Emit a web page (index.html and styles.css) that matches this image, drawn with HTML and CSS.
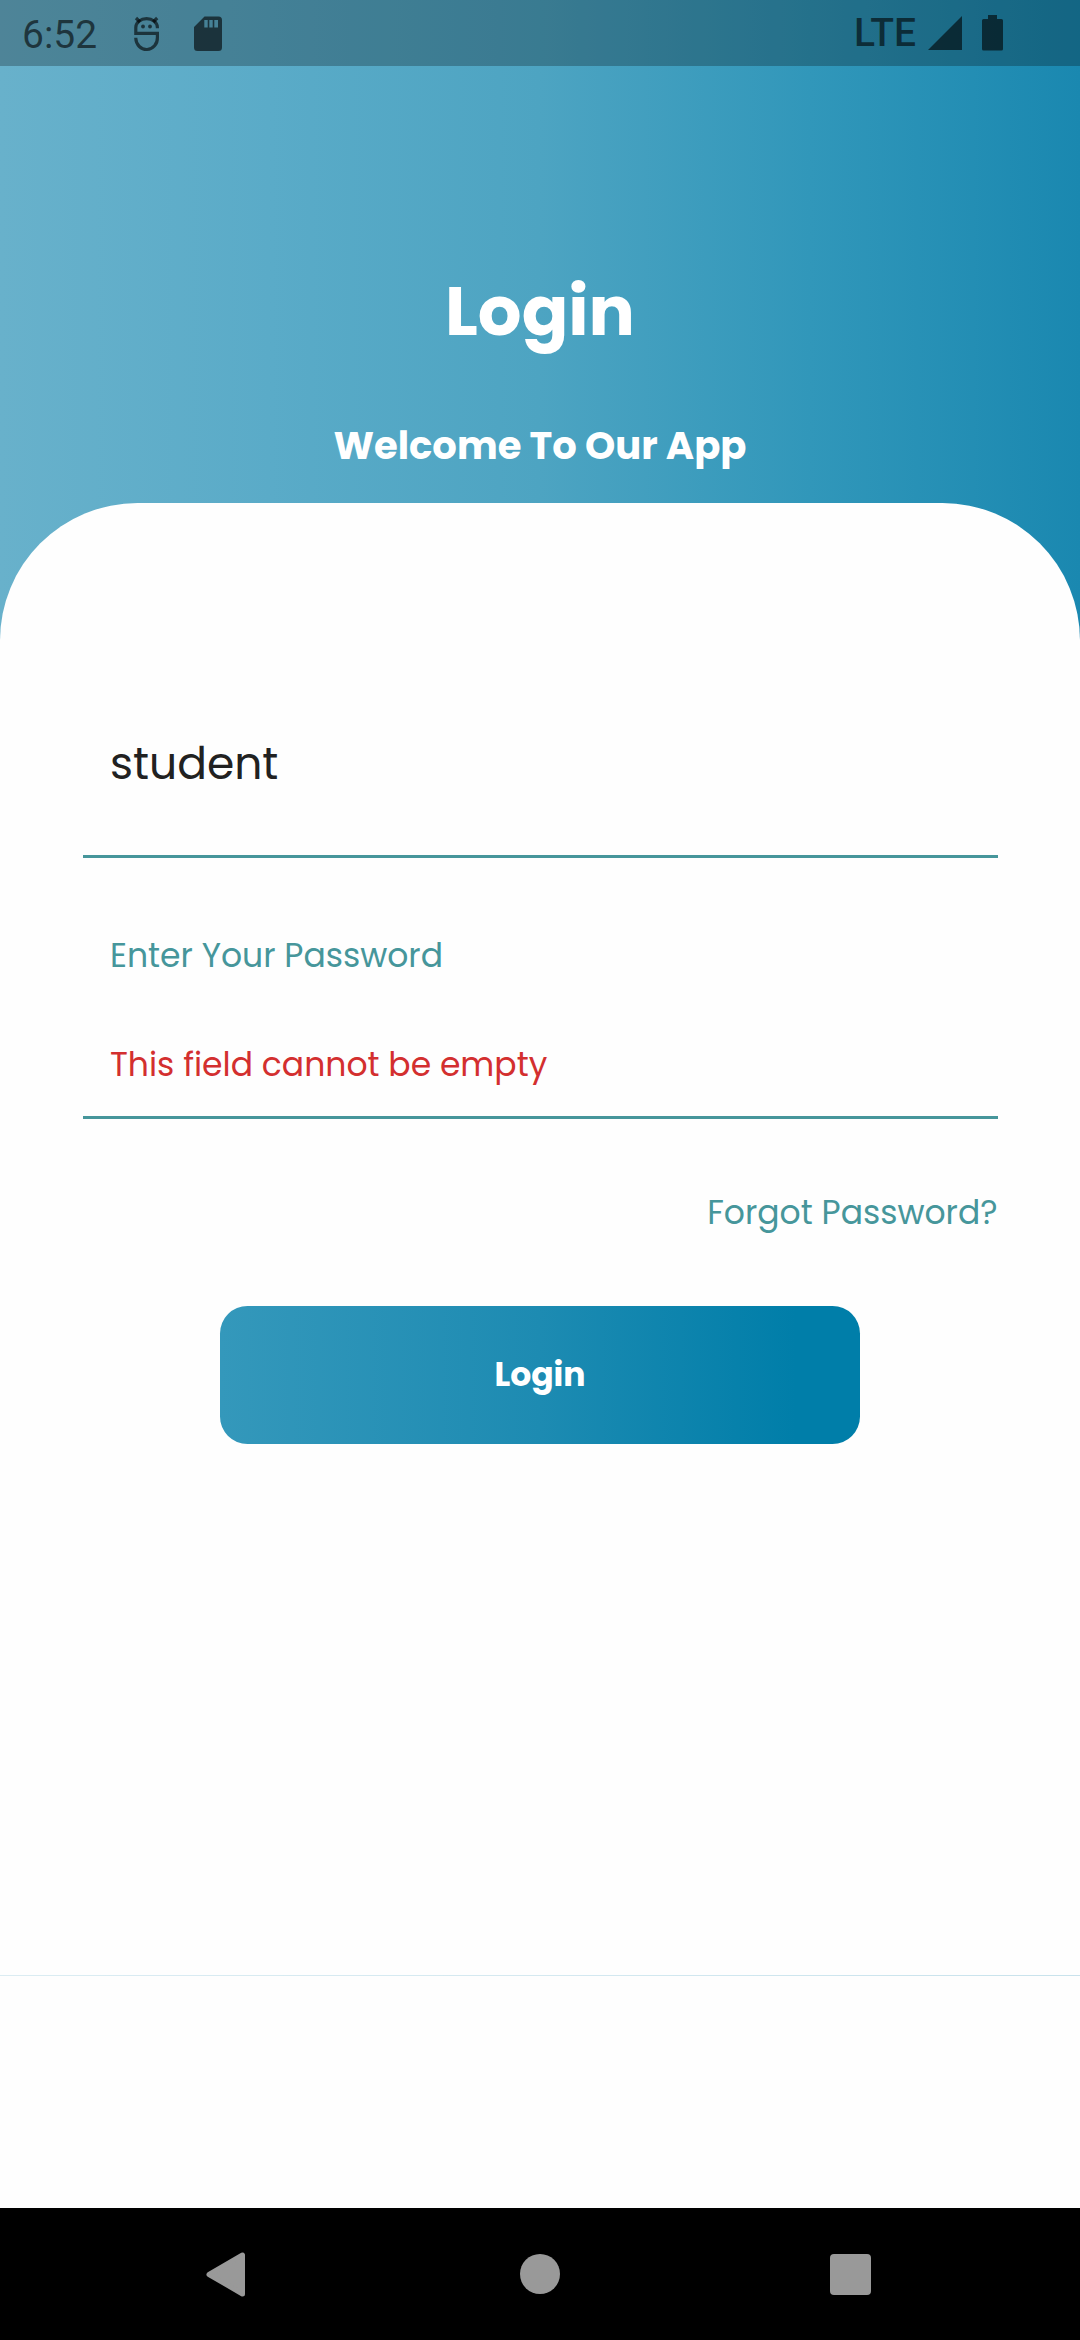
FILE: index.html
```html
<!DOCTYPE html>
<html lang="en">
<head>
<meta charset="utf-8">
<title>Login</title>
<link rel="stylesheet" href="styles.css">
</head>
<body>
<div class="screen">
  <div class="status">
    <span class="clock">6:52</span>
    <svg class="debug" width="26" height="36" viewBox="0 0 26 36" fill="none" stroke="currentColor" stroke-width="3.200">
      <path d="M23.400 12.200V11.500A10.800 8.800 0 0 0 1.800 11.500V17.300H23.400V21.500A10.800 11.500 0 0 1 1.800 22.500V21.800"/>
      <path d="M2 2L6 6M23.200 2L19.200 6"/>
      <circle cx="9" cy="10.500" r="1.900" fill="currentColor" stroke="none"/>
      <circle cx="16" cy="10.500" r="1.900" fill="currentColor" stroke="none"/>
    </svg>
    <svg class="sdcard" width="28" height="36" viewBox="0 0 28 36" fill="currentColor">
      <path fill-rule="evenodd" d="M10.500 .5H24.500Q28 .5 28 4V31.500Q28 35 24.500 35H3.500Q0 35 0 31.500V11ZM10.300 4V11.500H13.700V4ZM15.300 4V11.500H18.700V4ZM20.300 4V11.500H24V4Z"/>
    </svg>
    <span class="network">LTE</span>
    <svg class="signal" width="34" height="34" viewBox="0 0 34 34" fill="currentColor"><path d="M34 0V34H0Z"/></svg>
    <svg class="battery" width="21" height="36" viewBox="0 0 21 36" fill="currentColor"><path d="M6 0H15V4H19.500Q21 4 21 5.500V34Q21 35.500 19.500 35.500H1.500Q0 35.500 0 34V5.500Q0 4 1.500 4H6Z"/></svg>
  </div>
  <header class="hero">
    <h1 class="title">Login</h1>
    <p class="welcome">Welcome To Our App</p>
  </header>
  <main class="card">
    <div class="field"><span class="value">student</span></div>
    <div class="field password">
      <span class="hint">Enter Your Password</span>
      <span class="error">This field cannot be empty</span>
    </div>
    <a class="forgot">Forgot Password?</a>
    <button class="submit">Login</button>
  </main>
  <div class="footer"></div>
  <nav class="nav">
    <svg class="back" width="40" height="46" viewBox="0 0 40 46"><path d="M3 23.500L36.500 4V43Z"/></svg>
    <svg class="home" width="42" height="42" viewBox="0 0 42 42"><circle class="dot" cx="21" cy="21" r="20"/></svg>
    <svg class="recents" width="42" height="42" viewBox="0 0 42 42"><rect class="dot" y="1" width="41" height="41" rx="4"/></svg>
  </nav>
</div>
</body>
</html>
```
FILE: styles.css
```css
* { box-sizing: border-box; }
body { margin: 0; }
h1, p { margin: 0; }
.screen {
  width: 1080px;
  height: 2340px;
  display: flex;
  flex-direction: column;
  font-family: Poppins, Inter, sans-serif;
  background: linear-gradient(90deg, #68b1cb 0%, #5aabc8 25%, #4da4c2 50%, #3197ba 75%, #1a88b0 100%);
}
.status {
  height: 66px;
  display: flex;
  align-items: flex-start;
  padding: 0 77px 0 22px;
  background: rgba(0, 0, 0, .25);
  color: rgba(0, 0, 0, .6);
  font-family: Roboto, sans-serif;
}
.clock { font-size: 39px; line-height: 46px; margin-top: 12px; width: 112px; }
.debug { margin-top: 16px; }
.sdcard { margin: 16px 0 0 34px; }
.network { font-size: 39px; line-height: 46px; font-weight: 500; margin: 10px 12px 0 auto; }
.signal { margin-top: 16px; }
.battery { margin: 15px 0 0 20px; }
.hero {
  height: 437px;
  display: flex;
  flex-direction: column;
  align-items: center;
  color: #fff;
  font-weight: 700;
}
.title { font-size: 68.750px; line-height: 100px; margin-top: 195px; font-weight: 700; }
.welcome { font-size: 38.500px; line-height: 61px; margin-top: 54px; }
.card {
  height: 1472px;
  padding: 165px 82.500px 0;
  display: flex;
  flex-direction: column;
  background: #fefefe;
  border-radius: 137.500px 137.500px 0 0;
}
.field {
  height: 190px;
  padding: 65px 27.500px 0;
  border-bottom: 3px solid #46969b;
  display: flex;
  flex-direction: column;
}
.value { font-size: 44px; line-height: 61px; color: #212121; }
.password { height: 261px; padding-top: 67px; }
.hint, .error, .forgot { font-size: 33px; line-height: 61px; color: #46969b; }
.error { margin-top: 48px; color: #d32f2f; }
.forgot { align-self: flex-end; margin-top: 63px; }
.submit {
  align-self: center;
  width: 640px;
  height: 137.500px;
  margin-top: 63px;
  padding: 0;
  border: 0;
  border-radius: 27.500px;
  background: linear-gradient(90deg, #3498bb, #1d8bb2 50%, #007ea9 90%);
  color: #fff;
  font: inherit;
  font-size: 33px;
  font-weight: 700;
}
.footer {
  height: 233px;
  border-top: 1px solid rgba(254, 254, 254, .77);
  background: #fefefe padding-box;
}
.nav {
  height: 132px;
  background: #000;
  display: flex;
  align-items: center;
  padding-left: 206px;
}
.home { margin-left: 273px; }
.recents { margin-left: 269px; }
.back path { fill: #999; stroke: #999; stroke-width: 5; stroke-linejoin: round; }
.dot { fill: #999; }
```
